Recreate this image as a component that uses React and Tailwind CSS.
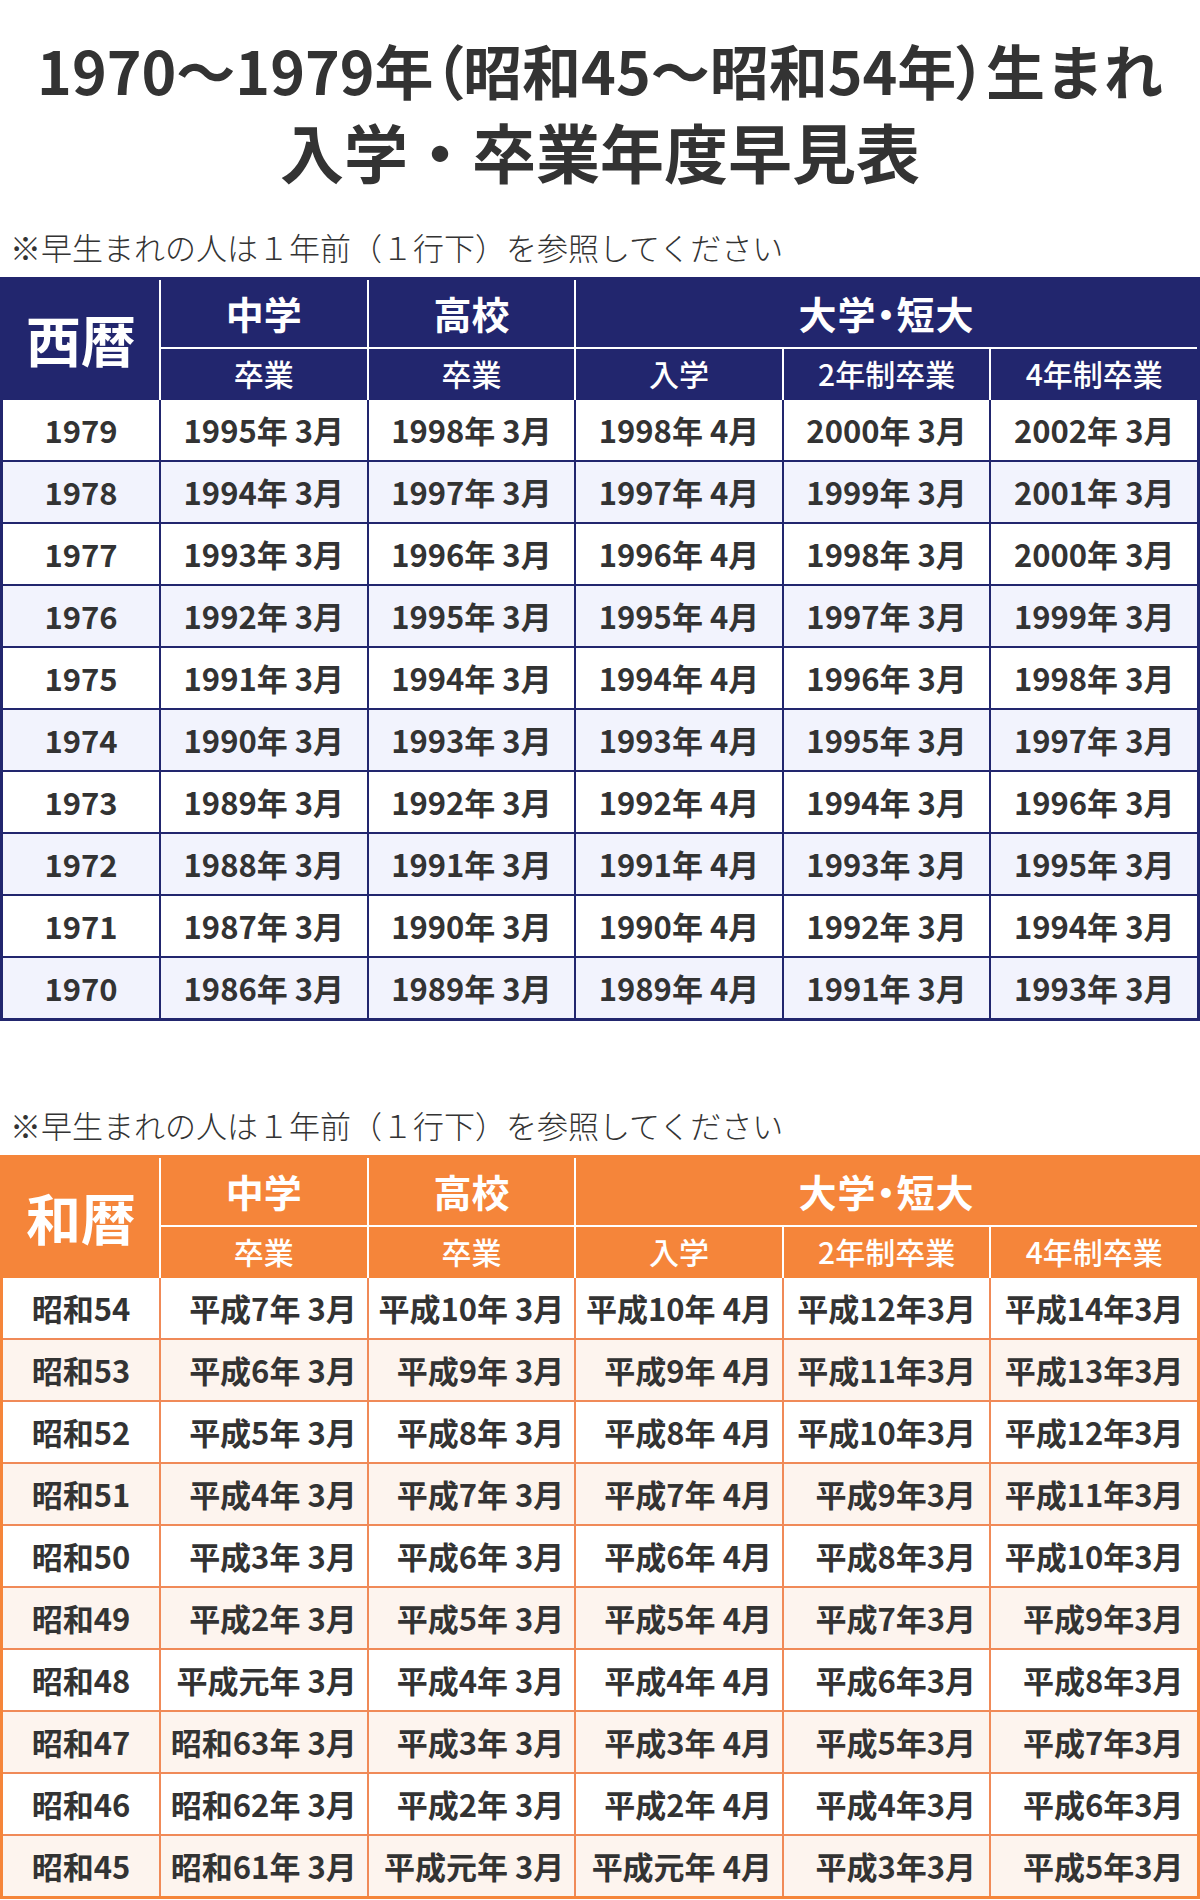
import React from "react";

const years = [1979, 1978, 1977, 1976, 1975, 1974, 1973, 1972, 1971, 1970];

// 3月・4月時点の和暦（1989年以降は平成、元年表記）
const wareki = (y) => {
  if (y >= 1989) {
    const n = y - 1988;
    return `平成${n === 1 ? "元" : n}`;
  }
  return `昭和${y - 1925}`;
};

const seirekiRows = years.map((y) => [
  String(y),
  `${y + 16}年 3月`,
  `${y + 19}年 3月`,
  `${y + 19}年 4月`,
  `${y + 21}年 3月`,
  `${y + 23}年 3月`,
]);

const warekiRows = years.map((y) => [
  `昭和${y - 1925}`,
  `${wareki(y + 16)}年 3月`,
  `${wareki(y + 19)}年 3月`,
  `${wareki(y + 19)}年 4月`,
  `${wareki(y + 21)}年3月`,
  `${wareki(y + 23)}年3月`,
]);

const themes = {
  blue: {
    head: "bg-[#22266e]",
    frame: "border-[#22266e]",
    lines: "bg-[#22266e]",
    alt: "bg-[#f2f3fd]",
  },
  orange: {
    head: "bg-[#f5853a]",
    frame: "border-[#f5853a]",
    lines: "bg-[#f08a58]",
    alt: "bg-[#fdf4ee]",
  },
};

const Note = ({ className }) => (
  <p className={`pl-[10px] text-[31px] leading-[40px] font-light text-[#333] ${className}`}>
    ※早生まれの人は１年前（１行下）を参照してください
  </p>
);

const HeadCell = ({ className, children }) => (
  <div className={`flex items-center justify-center pb-[3px] text-white ${className}`}>{children}</div>
);

const YearTable = ({ label, rows, theme, rightAlign }) => {
  const t = themes[theme];

  // 列ごとの最長の文字列（右揃えの基準幅）
  const longest = rows[0].map((_, c) =>
    rows.reduce((a, r) => (r[c].length > a.length ? r[c] : a), "")
  );

  return (
    <div>
      {/* Header */}
      <div
        className={`grid grid-cols-[156px_repeat(5,minmax(0,1fr))] grid-rows-[67px_51px] gap-[2px] bg-white border-[3px] border-b-0 ${t.frame}`}
      >
        <HeadCell className={`row-span-2 text-[55px] font-bold ${t.head}`}>{label}</HeadCell>
        <HeadCell className={`text-[38px] font-bold ${t.head}`}>中学</HeadCell>
        <HeadCell className={`text-[38px] font-bold ${t.head}`}>高校</HeadCell>
        <HeadCell
          className={`col-span-3 text-[38px] font-bold tracking-[1px] [font-feature-settings:'palt'] ${t.head}`}
        >
          大学・短大
        </HeadCell>
        <HeadCell className={`text-[30px] font-medium ${t.head}`}>卒業</HeadCell>
        <HeadCell className={`text-[30px] font-medium ${t.head}`}>卒業</HeadCell>
        <HeadCell className={`text-[30px] font-medium ${t.head}`}>入学</HeadCell>
        <HeadCell className={`text-[30px] font-medium ${t.head}`}>2年制卒業</HeadCell>
        <HeadCell className={`text-[30px] font-medium ${t.head}`}>4年制卒業</HeadCell>
      </div>

      {/* Body */}
      <div
        className={`grid grid-cols-[156px_repeat(5,minmax(0,1fr))] auto-rows-[60px] gap-[2px] border-[3px] border-t-0 ${t.frame} ${t.lines}`}
      >
        {rows.map((row, i) =>
          row.map((cell, c) => (
            <div
              key={`${i}-${c}`}
              className={`flex items-center justify-center pb-[2px] text-[31px] font-bold leading-none text-[#333] ${
                i % 2 === 1 ? t.alt : "bg-white"
              }`}
            >
              {rightAlign && c > 0 ? (
                <span className="inline-grid justify-items-end">
                  <span className="invisible col-start-1 row-start-1">{longest[c]}</span>
                  <span className="col-start-1 row-start-1">{cell}</span>
                </span>
              ) : (
                cell
              )}
            </div>
          ))
        )}
      </div>
    </div>
  );
};

export default function App() {
  return (
    <div className="w-[1200px] bg-white font-['Noto_Sans_CJK_JP','Noto_Sans',sans-serif] text-[#333]">
      <div className="pt-[30px] text-center font-bold">
        <h1 className="text-[59px] leading-[80px]">
          1970～1979年<span className="[font-feature-settings:'palt']">（</span>昭和45～昭和54年
          <span className="[font-feature-settings:'palt']">）</span>生まれ
        </h1>
        <h2 className="text-[64px] leading-[80px]">入学・卒業年度早見表</h2>
      </div>

      <Note className="mt-[37px] mb-[10px]" />
      <YearTable label="西暦" rows={seirekiRows} theme="blue" />

      <Note className="mt-[84px] mb-[10px]" />
      <YearTable label="和暦" rows={warekiRows} theme="orange" rightAlign />
    </div>
  );
}
